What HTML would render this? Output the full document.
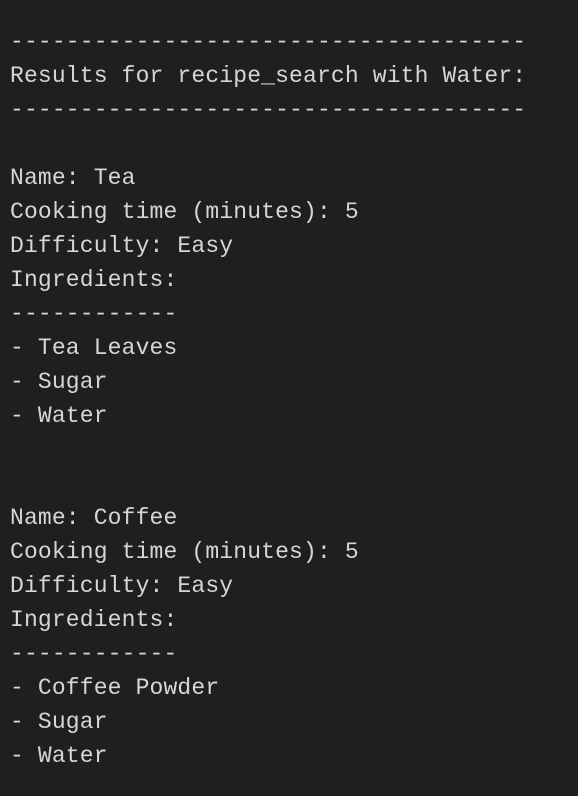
<!DOCTYPE html>
<html><head><meta charset="utf-8"><style>
html,body{margin:0;padding:0;background:#1f1f1f;}
body{width:578px;height:796px;overflow:hidden;}
pre{margin:0;padding:25px 0 0 10px;font-family:"Liberation Mono",monospace;font-size:23px;letter-spacing:0.15px;line-height:34px;color:#d6d6d6;}
</style></head><body><pre>-------------------------------------
Results for recipe_search with Water:
-------------------------------------

Name: Tea
Cooking time (minutes): 5
Difficulty: Easy
Ingredients:
------------
- Tea Leaves
- Sugar
- Water


Name: Coffee
Cooking time (minutes): 5
Difficulty: Easy
Ingredients:
------------
- Coffee Powder
- Sugar
- Water</pre></body></html>
